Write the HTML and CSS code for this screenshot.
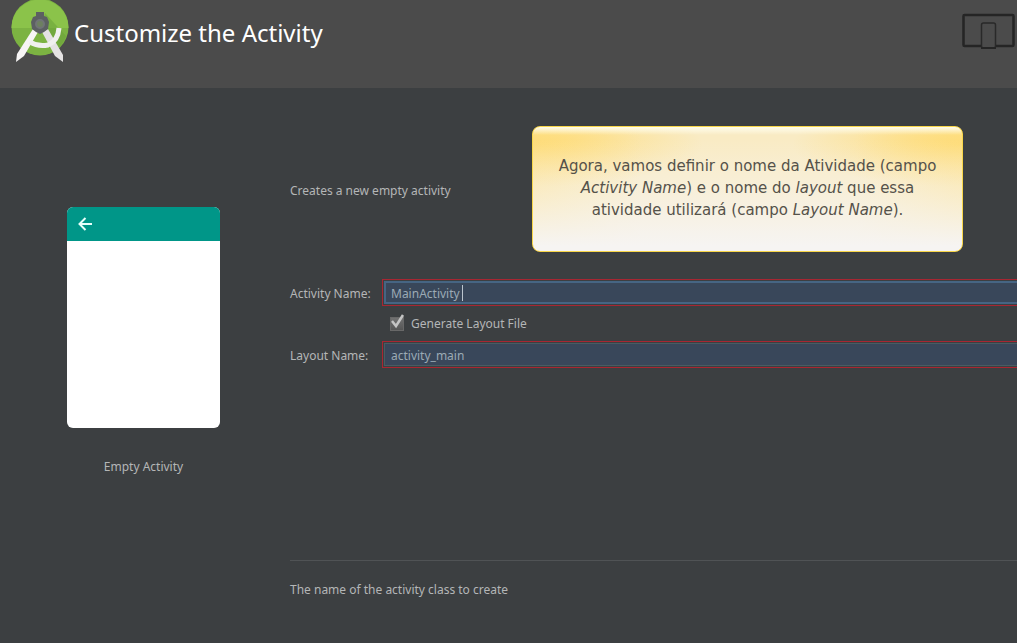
FILE: index.html
```html
<!DOCTYPE html>
<html lang="pt-BR">
<head>
<meta charset="utf-8">
<meta name="viewport" content="width=device-width, initial-scale=1">
<title>Customize the Activity</title>
<link rel="stylesheet" href="styles.css">
</head>
<body>
<header class="header">
  <svg class="logo" viewBox="0 0 60 64" aria-hidden="true">
    <circle cx="30" cy="27" r="28.500" fill="#7cb342"/>
    <path d="M1.500 28a28.500 28.500 0 0 1 57 0z" fill="#8bc34a"/>
    <path d="M35 13l21 23a28 28 0 0 1-10 14L31 31z" fill="#689f38" opacity=".5"/>
    <path d="M32 32l6-3 15 26v7l-8-6z" fill="#e4e2e2"/>
    <path d="M28 32l-5-3L7 54l-1 8 8-6z" fill="#f7f5f5"/>
    <path d="M20 42Q28 47 38 45Q48 41 49 28" fill="none" stroke="#f0f0ee" stroke-width="5"/>
    <path d="M26 12h8v4l3 1 2 5-1 7-4 3-4 2-4-2-4-3-1-7 2-5 3-1z" fill="#5c6062"/>
    <circle cx="30" cy="24" r="4" fill="#6d8060" stroke="#707476" stroke-width="2"/>
  </svg>
  <h1 class="title">Customize the Activity</h1>
  <svg class="devices" viewBox="0 0 54 38" aria-hidden="true">
    <rect x="2.500" y="3" width="50" height="31" rx="1" fill="none" stroke="#252525" stroke-width="2.500"/>
    <rect x="20.500" y="11" width="14" height="25" rx="2" fill="#4b4b4b" stroke="#292929" stroke-width="1.500"/>
    <path d="M20 36h15" stroke="#252525" stroke-width="2"/>
  </svg>
</header>
<main class="content">
  <section class="preview">
    <div class="phone">
      <div class="appbar">
        <svg class="arrow" viewBox="0 0 14 14" aria-hidden="true"><path d="M14 7H2M7.500 1L1.500 7l6 6" fill="none" stroke="#e8fffb" stroke-width="2"/></svg>
      </div>
    </div>
    <p class="caption">Empty Activity</p>
  </section>
  <section class="details">
    <p class="intro">Creates a new empty activity</p>
    <aside class="callout">
      <p class="callout-text">Agora, vamos definir o nome da Atividade (campo <em>Activity Name</em>) e o nome do <em>layout</em> que essa atividade utilizará (campo <em>Layout Name</em>).</p>
    </aside>
    <form class="form">
      <label class="label" for="activity">Activity Name:</label>
      <div class="field field-active"><input class="input" id="activity" type="text" value="MainActivity"><span class="caret"></span></div>
      <div class="option">
        <input class="check" id="generate" type="checkbox" checked>
        <label for="generate">Generate Layout File</label>
        <svg class="tick" viewBox="0 0 16 16" aria-hidden="true"><path d="M3 7l4 5L14 1" fill="none" stroke="#c4c4c4" stroke-width="2.500"/></svg>
      </div>
      <label class="label" for="layout">Layout Name:</label>
      <div class="field"><input class="input" id="layout" type="text" value="activity_main"></div>
    </form>
    <p class="hint">The name of the activity class to create</p>
  </section>
</main>
</body>
</html>
```
FILE: styles.css
```css
* { box-sizing: border-box; }
body {
  margin: 0;
  min-height: 100vh;
  background: #3c3f41;
  color: #b4b6b7;
  font: 12px/18px "Noto Sans", "Open Sans", sans-serif;
  overflow-x: hidden;
}
p, h1 { margin: 0; }
.header {
  display: flex;
  align-items: flex-start;
  height: 88px;
  padding: 0 2px 0 10px;
  background: #4b4b4b;
}
.logo { width: 60px; height: 64px; }
.title {
  flex: 1;
  padding: 16px 0 0 4px;
  color: #fff;
  font-size: 24px;
  font-weight: 400;
  line-height: 34px;
}
.devices { width: 54px; height: 38px; margin-top: 12px; }
.content {
  display: grid;
  grid-template-columns: 287px 1fr;
  gap: 3px;
}
.preview {
  display: flex;
  flex-direction: column;
  align-items: center;
  padding-top: 119px;
}
.phone {
  width: 153px;
  height: 221px;
  border-radius: 6px;
  background: #fff;
  overflow: hidden;
}
.appbar {
  display: flex;
  align-items: center;
  height: 34px;
  padding-left: 11px;
  background: #009688;
}
.arrow { width: 14px; height: 14px; }
.caption { margin-top: 30px; }
.details {
  position: relative;
  padding-top: 94px;
}
.callout {
  position: absolute;
  top: 38px;
  right: 54px;
  width: 431px;
  padding: 28px 20px 30px;
  border: 1px solid #f8d649;
  border-radius: 8px;
  background:
    linear-gradient(#fffdec, #fff6cf00 8px),
    linear-gradient(#f5f3f000 10%, #f6f4f2 96%),
    radial-gradient(ellipse at 0 14%, #fedc78, #fedc7800 28%),
    radial-gradient(ellipse at 100% 14%, #fedc78, #fedc7800 28%),
    linear-gradient(90deg, #fde49a, #f9ebc4 25%, #f9ebc4 75%, #fde49a);
  color: #55524a;
  font: 15px/22px "DejaVu Sans", Verdana, sans-serif;
  text-align: center;
}
.form {
  display: grid;
  grid-template-columns: 92px 1fr;
  align-items: center;
  row-gap: 8px;
  margin-top: 79px;
}
.label { padding-top: 2px; }
.field {
  position: relative;
  height: 27px;
  padding: 1px 0 1px 1px;
  border: 1px solid #a82632;
  border-right: 0;
}
.input {
  display: block;
  width: 100%;
  height: 23px;
  padding: 2px 6px 0;
  border: 1px solid #485c63;
  border-right: 0;
  border-radius: 0;
  outline: 0;
  background: #39475a;
  color: #9baab5;
  font: inherit;
}
.field-active .input { border: 2px solid #466583; border-right: 0; padding-left: 5px; }
.caret {
  position: absolute;
  top: 5px;
  left: 79px;
  width: 1px;
  height: 16px;
  background: #bbc5ce;
}
.option {
  grid-column: 2;
  position: relative;
  display: flex;
  align-items: center;
  gap: 7px;
  height: 19px;
  padding-left: 8px;
}
.check {
  appearance: none;
  width: 14px;
  height: 14px;
  margin: 0;
  border: 1px solid #686868;
  background: linear-gradient(#717171, #555);
}
.tick {
  position: absolute;
  top: 0;
  left: 7px;
  width: 16px;
  height: 16px;
  pointer-events: none;
}
.hint {
  margin-top: 192px;
  padding-top: 20px;
  border-top: 1px solid #505355;
}
```
